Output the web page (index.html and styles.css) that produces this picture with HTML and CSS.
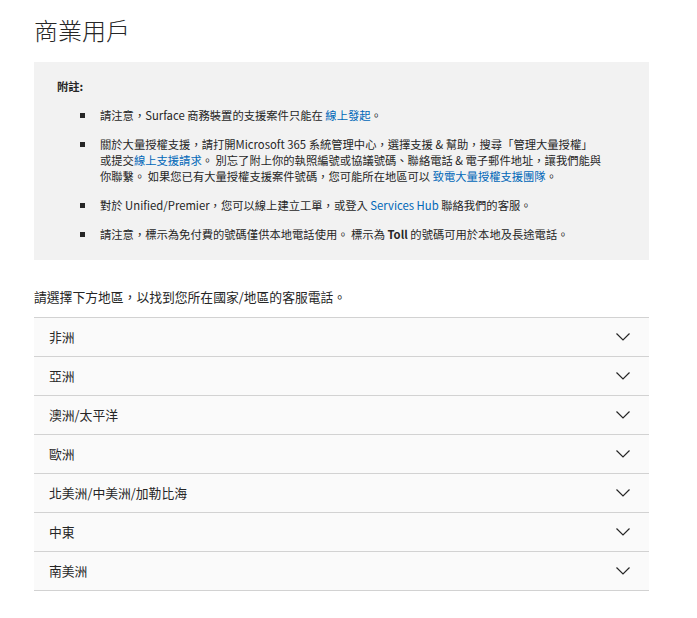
FILE: index.html
```html
<!DOCTYPE html>
<html lang="zh-Hant">
<head>
<meta charset="utf-8">
<title>商業用戶</title>
<link rel="stylesheet" href="styles.css">
</head>
<body>
<main class="page">
  <h1 class="title">商業用戶</h1>
  <section class="note">
    <p class="note-label">附註:</p>
    <ul class="note-list">
      <li><span>請注意，Surface 商務裝置的支援案件只能在 <a href="#">線上發起</a>。</span></li>
      <li><span>關於大量授權支援，請打開Microsoft 365 系統管理中心，選擇支援 &amp; 幫助，搜尋「管理大量授權」<br>或提交<a href="#">線上支援請求</a>。 別忘了附上你的執照編號或協議號碼、聯絡電話 &amp; 電子郵件地址，讓我們能與<br>你聯繫。 如果您已有大量授權支援案件號碼，您可能所在地區可以 <a href="#">致電大量授權支援團隊</a>。</span></li>
      <li><span>對於 Unified/Premier，您可以線上建立工單，或登入 <a href="#">Services Hub</a> 聯絡我們的客服。</span></li>
      <li><span>請注意，標示為免付費的號碼僅供本地電話使用。 標示為 <b>Toll</b> 的號碼可用於本地及長途電話。</span></li>
    </ul>
  </section>
  <p class="intro">請選擇下方地區，以找到您所在國家/地區的客服電話。</p>
  <div class="accordion">
    <div class="row"><span>非洲</span><svg class="chev" width="14" height="8" viewBox="0 0 14 8"><polyline points="0.5,0.5 7,7 13.5,0.5" fill="none" stroke="#262626" stroke-width="1.2"/></svg></div>
    <div class="row"><span>亞洲</span><svg class="chev" width="14" height="8" viewBox="0 0 14 8"><polyline points="0.5,0.5 7,7 13.5,0.5" fill="none" stroke="#262626" stroke-width="1.2"/></svg></div>
    <div class="row"><span>澳洲/太平洋</span><svg class="chev" width="14" height="8" viewBox="0 0 14 8"><polyline points="0.5,0.5 7,7 13.5,0.5" fill="none" stroke="#262626" stroke-width="1.2"/></svg></div>
    <div class="row"><span>歐洲</span><svg class="chev" width="14" height="8" viewBox="0 0 14 8"><polyline points="0.5,0.5 7,7 13.5,0.5" fill="none" stroke="#262626" stroke-width="1.2"/></svg></div>
    <div class="row"><span>北美洲/中美洲/加勒比海</span><svg class="chev" width="14" height="8" viewBox="0 0 14 8"><polyline points="0.5,0.5 7,7 13.5,0.5" fill="none" stroke="#262626" stroke-width="1.2"/></svg></div>
    <div class="row"><span>中東</span><svg class="chev" width="14" height="8" viewBox="0 0 14 8"><polyline points="0.5,0.5 7,7 13.5,0.5" fill="none" stroke="#262626" stroke-width="1.2"/></svg></div>
    <div class="row"><span>南美洲</span><svg class="chev" width="14" height="8" viewBox="0 0 14 8"><polyline points="0.5,0.5 7,7 13.5,0.5" fill="none" stroke="#262626" stroke-width="1.2"/></svg></div>
  </div>
</main>
</body>
</html>
```
FILE: styles.css
```css
html, body {
  margin: 0;
  padding: 0;
  background: #ffffff;
}
body {
  font-family: "Noto Sans CJK TC", "Noto Sans", sans-serif;
  font-size: 12.8px;
  line-height: 16px;
  color: #262626;
}
.page {
  width: 615px;
  margin-left: 34px;
  padding-top: 14px;
}
.title {
  margin: 0;
  font-size: 24px;
  line-height: 32px;
  font-weight: 300;
  color: #262626;
}
.note {
  margin-top: 16px;
  background: #f2f2f2;
  padding: 16px 22px 18px 23px;
  font-size: 11.3px;
}
.note-label {
  margin: 0;
  font-weight: 700;
}
.note-list {
  list-style: none;
  margin: 0;
  padding: 0;
}
.note-list li {
  display: flex;
  margin-top: 13px;
}
.note-list li span {
  white-space: nowrap;
}
.note-list li::before {
  content: "";
  flex: none;
  width: 5px;
  height: 5px;
  background: #262626;
  margin: 6px 15px 0 23px;
}
a {
  color: #0067b8;
  text-decoration: none;
}
b {
  font-weight: 700;
}
.intro {
  margin: 29px 0 12px;
}
.accordion {
  border-bottom: 1px solid #d2d2d2;
}
.row {
  display: flex;
  align-items: center;
  justify-content: space-between;
  height: 38px;
  border-top: 1px solid #d2d2d2;
  background: #fafafa;
  padding: 0 19px 0 15px;
}
.chev {
  display: block;
}
```
